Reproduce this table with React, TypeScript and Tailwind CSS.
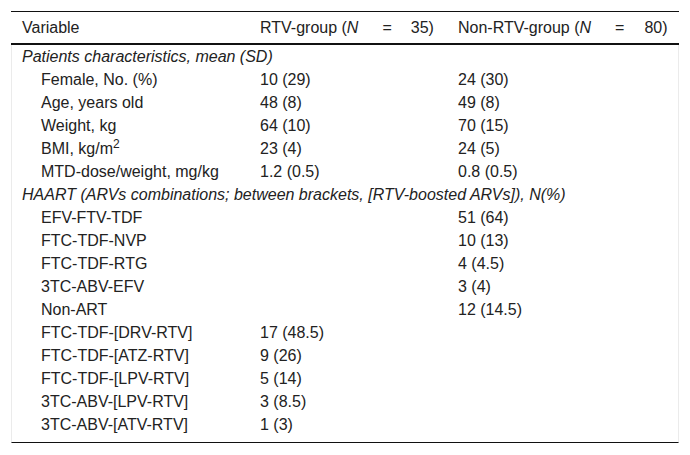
const rows: { label: string; a?: string; b?: string; group?: boolean; sup?: boolean }[] = [
  { label: "Patients characteristics, mean (SD)", group: true },
  { label: "Female, No. (%)", a: "10 (29)", b: "24 (30)" },
  { label: "Age, years old", a: "48 (8)", b: "49 (8)" },
  { label: "Weight, kg", a: "64 (10)", b: "70 (15)" },
  { label: "BMI, kg/m", a: "23 (4)", b: "24 (5)", sup: true },
  { label: "MTD-dose/weight, mg/kg", a: "1.2 (0.5)", b: "0.8 (0.5)" },
  { label: "HAART (ARVs combinations; between brackets, [RTV-boosted ARVs]), N(%)", group: true },
  { label: "EFV-FTV-TDF", b: "51 (64)" },
  { label: "FTC-TDF-NVP", b: "10 (13)" },
  { label: "FTC-TDF-RTG", b: "4 (4.5)" },
  { label: "3TC-ABV-EFV", b: "3 (4)" },
  { label: "Non-ART", b: "12 (14.5)" },
  { label: "FTC-TDF-[DRV-RTV]", a: "17 (48.5)" },
  { label: "FTC-TDF-[ATZ-RTV]", a: "9 (26)" },
  { label: "FTC-TDF-[LPV-RTV]", a: "5 (14)" },
  { label: "3TC-ABV-[LPV-RTV]", a: "3 (8.5)" },
  { label: "3TC-ABV-[ATV-RTV]", a: "1 (3)" },
];

export default function App() {
  return (
    <div className="min-h-screen bg-white pt-[11px] pl-[11px] text-[16px] text-[#222] font-['Liberation_Sans',Arial,sans-serif]">
      <div className="w-[668px]">
        {/* Header */}
        <div className="grid grid-cols-[238px_198px_1fr] h-[34px] border-t border-b-2 border-[#111] items-center">
          <div className="pl-[11px]">Variable</div>
          <div className="pl-[11px] whitespace-nowrap">
            RTV-group (<i>N</i>
            <span className="ml-[24px]">=</span>
            <span className="ml-[19px]">35)</span>
          </div>
          <div className="pl-[11px] whitespace-nowrap">
            Non-RTV-group (<i>N</i>
            <span className="ml-[24px]">=</span>
            <span className="ml-[20px]">80)</span>
          </div>
        </div>

        {/* Body */}
        <div className="border-x border-[#ebebeb] border-b border-b-[#111] pb-[6px]">
          {rows.map((r, i) =>
            r.group ? (
              <div key={i} className="h-[23px] flex items-center pl-[10px] italic whitespace-nowrap">
                {r.label}
              </div>
            ) : (
              <div key={i} className="grid grid-cols-[237px_198px_1fr] h-[23px] items-center">
                <div className="pl-[29px] whitespace-nowrap">
                  {r.label}
                  {r.sup && <sup className="text-[12px]">2</sup>}
                </div>
                <div className="pl-[11px]">{r.a}</div>
                <div className="pl-[11px]">{r.b}</div>
              </div>
            )
          )}
        </div>
      </div>
    </div>
  );
}
